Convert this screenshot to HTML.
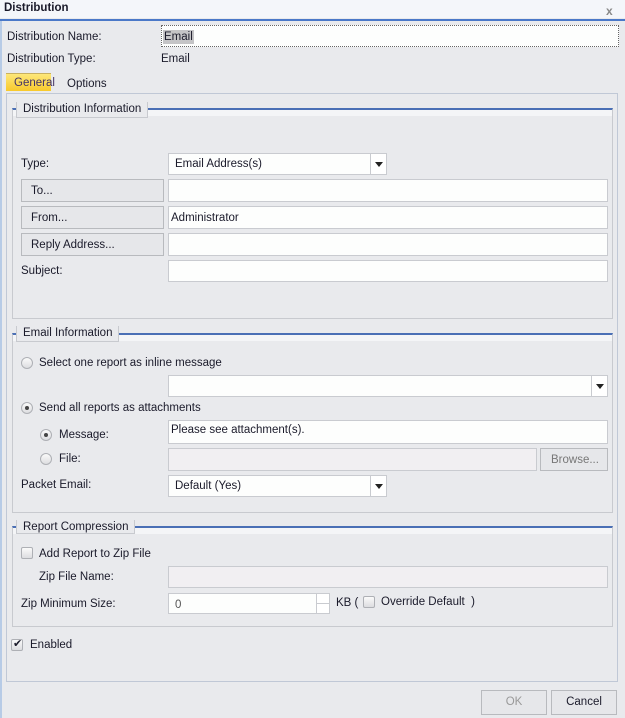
<!DOCTYPE html>
<html><head><meta charset="utf-8"><style>
*{box-sizing:border-box;margin:0;padding:0}
body{width:625px;height:718px;background:#e9eaed;font-family:"Liberation Sans",sans-serif;font-size:11.5px;color:#1a1a2a;position:relative;overflow:hidden}
.a{position:absolute}
.t{position:absolute;line-height:14px;white-space:nowrap}
.inp{position:absolute;background:#fdfefd;border:1px solid #c9cbd0}
.dis{background:#f1eff2}
.btn{position:absolute;background:#e6e7ea;border:1px solid #b8babe;line-height:23px;padding-left:9px}
.fs{position:absolute;border:1px solid #c8cacf;border-top:2px solid #4a6fb5}
.fs .strip{position:absolute;left:0;right:0;top:0;height:6px;background:#f4f5f7}
.lg{position:absolute;background:#e9eaed;border:1px solid #c8cacf;border-top:none;padding:0 6px;line-height:14px;font-size:11.5px}
.arr{position:absolute;right:0;top:0;bottom:0;width:16px;border-left:1px solid #c9cbd0;background:#fff}
.arr:after{content:"";position:absolute;left:4px;top:8px;border-left:4px solid transparent;border-right:4px solid transparent;border-top:5px solid #222}
.rad{position:absolute;width:12px;height:12px;border-radius:50%;border:1px solid #aeb0b5;background:linear-gradient(#fafafa,#dcdde0)}
.rad.on:after{content:"";position:absolute;left:3px;top:3px;width:4px;height:4px;border-radius:50%;background:#444}
.chk{position:absolute;width:12px;height:12px;border:1px solid #aeb0b5;border-radius:2px;background:linear-gradient(#fafafa,#dcdde0)}
</style></head><body>
<div class="a" style="left:0;top:0;width:625px;height:18px;background:#f4f6fa"></div>
<div class="t" style="left:4px;top:1px;font-weight:bold">Distribution</div>
<div class="t" style="left:606px;top:4px;color:#888;font-weight:bold;font-size:12px">x</div>
<div class="a" style="left:0;top:19px;width:625px;height:2px;background:#4a78c8"></div>
<div class="a" style="left:0;top:21px;width:2px;height:697px;background:#b7cbe6"></div>

<div class="t" style="left:7px;top:30px">Distribution Name:</div>
<div class="inp" style="left:161px;top:25px;width:458px;height:22px;border:1px dotted #666"></div>
<div class="t" style="left:163px;top:30px;background:#c4c4c6;padding:0 1px">Email</div>
<div class="t" style="left:7px;top:52px">Distribution Type:</div>
<div class="t" style="left:161px;top:52px">Email</div>

<div class="a" style="left:6px;top:73px;width:45px;height:18px;background:linear-gradient(#fde77a,#f8c92c);border-top:1px solid #c8b060"></div>
<div class="t" style="left:14px;top:76px;color:#443366">General</div>
<div class="t" style="left:67px;top:77px">Options</div>
<div class="a" style="left:6px;top:93px;width:612px;height:589px;border:1px solid #c0c8d6"></div>

<div class="fs" style="left:12px;top:108px;width:601px;height:211px"><div class="strip"></div></div>
<div class="lg" style="left:16px;top:102px;height:16px">Distribution Information</div>
<div class="t" style="left:21px;top:157px">Type:</div>
<div class="inp" style="left:168px;top:153px;width:219px;height:22px"><div class="arr"></div></div>
<div class="t" style="left:175px;top:157px">Email Address(s)</div>
<div class="btn" style="left:21px;top:179px;width:143px;height:23px">To...</div>
<div class="inp" style="left:168px;top:179px;width:440px;height:23px"></div>
<div class="btn" style="left:21px;top:206px;width:143px;height:23px">From...</div>
<div class="inp" style="left:168px;top:206px;width:440px;height:23px"></div>
<div class="t" style="left:171px;top:211px">Administrator</div>
<div class="btn" style="left:21px;top:233px;width:143px;height:23px">Reply Address...</div>
<div class="inp" style="left:168px;top:233px;width:440px;height:23px"></div>
<div class="t" style="left:21px;top:264px">Subject:</div>
<div class="inp" style="left:168px;top:260px;width:440px;height:22px"></div>

<div class="fs" style="left:12px;top:333px;width:601px;height:180px"><div class="strip"></div></div>
<div class="lg" style="left:16px;top:326px;height:16px">Email Information</div>
<div class="rad" style="left:21px;top:357px"></div>
<div class="t" style="left:39px;top:356px">Select one report as inline message</div>
<div class="inp" style="left:168px;top:375px;width:440px;height:22px"><div class="arr"></div></div>
<div class="rad on" style="left:21px;top:402px"></div>
<div class="t" style="left:39px;top:401px">Send all reports as attachments</div>
<div class="rad on" style="left:40px;top:429px"></div>
<div class="t" style="left:59px;top:428px">Message:</div>
<div class="inp" style="left:168px;top:420px;width:440px;height:24px"></div>
<div class="t" style="left:171px;top:423px">Please see attachment(s).</div>
<div class="rad" style="left:40px;top:453px"></div>
<div class="t" style="left:59px;top:452px">File:</div>
<div class="inp dis" style="left:168px;top:448px;width:369px;height:23px"></div>
<div class="btn" style="left:540px;top:448px;width:68px;height:23px;color:#777;padding-left:10px">Browse...</div>
<div class="t" style="left:21px;top:478px">Packet Email:</div>
<div class="inp" style="left:168px;top:475px;width:219px;height:22px"><div class="arr"></div></div>
<div class="t" style="left:175px;top:479px">Default (Yes)</div>

<div class="fs" style="left:12px;top:526px;width:601px;height:101px"><div class="strip"></div></div>
<div class="lg" style="left:16px;top:520px;height:14px">Report Compression</div>
<div class="chk" style="left:21px;top:547px"></div>
<div class="t" style="left:39px;top:547px">Add Report to Zip File</div>
<div class="t" style="left:39px;top:570px">Zip File Name:</div>
<div class="inp dis" style="left:168px;top:566px;width:440px;height:22px"></div>
<div class="t" style="left:21px;top:597px">Zip Minimum Size:</div>
<div class="inp" style="left:168px;top:593px;width:149px;height:21px"></div>
<div class="t" style="left:175px;top:598px;color:#555">0</div>
<div class="a" style="left:316px;top:593px;width:14px;height:21px;border:1px solid #c9cbd0;background:#fff"></div>
<div class="a" style="left:316px;top:603px;width:14px;height:1px;background:#c9cbd0"></div>
<div class="t" style="left:336px;top:596px">KB (</div>
<div class="chk" style="left:363px;top:596px"></div>
<div class="t" style="left:381px;top:595px">Override Default&nbsp; )</div>

<div class="chk" style="left:11px;top:639px"></div>
<div class="t" style="left:11px;top:637px;font-size:11px;padding-left:2px">✔</div>
<div class="t" style="left:30px;top:638px">Enabled</div>

<div class="btn" style="left:481px;top:690px;width:66px;height:25px;color:#999;padding-left:0;text-align:center;line-height:23px">OK</div>
<div class="btn" style="left:551px;top:690px;width:66px;height:25px;padding-left:0;text-align:center;line-height:23px">Cancel</div>
</body></html>
